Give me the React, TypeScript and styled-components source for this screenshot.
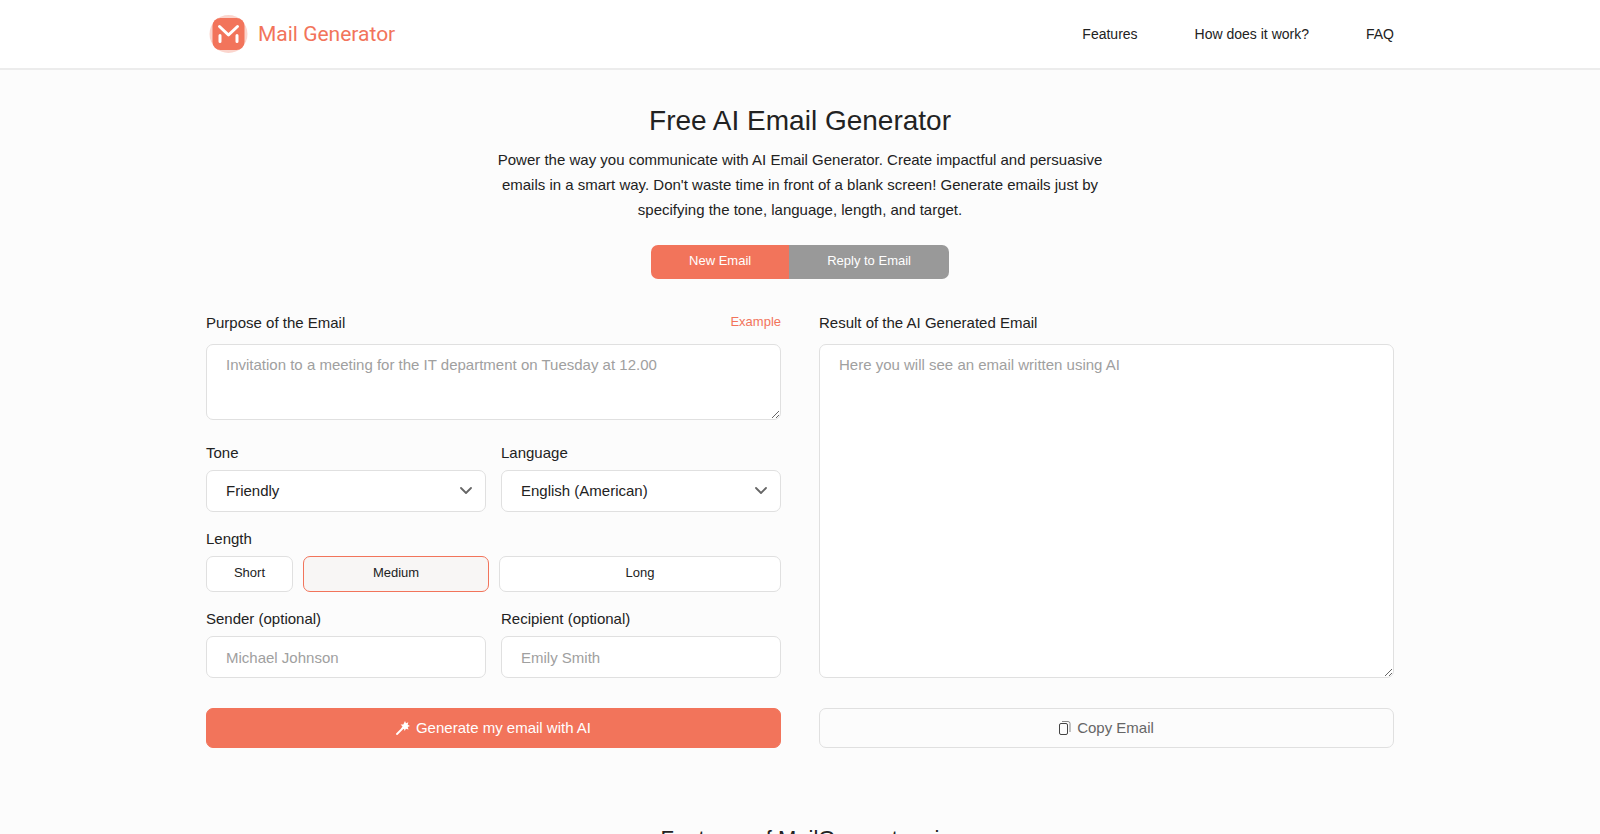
import React, { useState } from "react";
import styled, { createGlobalStyle, css } from "styled-components";

const accent = "#f2745b";
const ink = "#222222";
const line = "#e0e0e0";

const GlobalStyle = createGlobalStyle`
  *, *::before, *::after { box-sizing: border-box; }
  html { scrollbar-width: none; }
  body {
    margin: 0;
    background: #fcfcfc;
    color: ${ink};
    font-family: "Liberation Sans", Arial, sans-serif;
    font-size: 15px;
    line-height: 20px;
  }
  button, input, select, textarea { font: inherit; color: inherit; }
`;

const Page = styled.div`
  min-height: 100vh;
`;

const Container = styled.div`
  width: 100%;
  max-width: 1220px;
  margin: 0 auto;
  padding: 0 16px;
`;

const Main = styled(Container)`
  padding-bottom: 40px;
`;

const Header = styled.header`
  background: #ffffff;
  border-bottom: 2px solid #ececec;
`;

const HeaderRow = styled(Container)`
  display: flex;
  align-items: center;
  justify-content: space-between;
  height: 68px;
`;

const Brand = styled.a`
  display: flex;
  align-items: center;
  gap: 8px;
  color: ${accent};
  font-family: Roboto, sans-serif;
  font-size: 21px;
  font-weight: 400;
  text-decoration: none;
`;

const Nav = styled.nav`
  display: flex;
  gap: 57px;
`;

const NavLink = styled.a`
  color: ${ink};
  font-size: 14px;
  text-decoration: none;
`;

const Hero = styled.section`
  display: flex;
  flex-direction: column;
  align-items: center;
  padding-top: 33px;
  text-align: center;
`;

const Title = styled.h1`
  margin: 0;
  font-size: 28px;
  font-weight: 400;
  line-height: 36px;
`;

const Intro = styled.p`
  max-width: 640px;
  margin: 8px 0 0;
  line-height: 25px;
`;

const Tabs = styled.div`
  display: flex;
  margin-top: 23px;
  border-radius: 7px;
  overflow: hidden;
`;

const Tab = styled.button<{ $active: boolean }>`
  height: 34px;
  padding: 0 38px 3px;
  border: 0;
  background: ${(p) => (p.$active ? accent : "#999999")};
  color: #ffffff;
  font-size: 13px;
  cursor: pointer;
`;

const Form = styled.form`
  display: grid;
  grid-template-columns: 1fr 1fr;
  gap: 30px 38px;
  padding-top: 34px;
`;

const Column = styled.div`
  display: flex;
  flex-direction: column;
  gap: 17px;
`;

const Field = styled.div`
  display: flex;
  flex-direction: column;
  gap: 7px;
`;

const MessageField = styled(Field)`
  gap: 11px;
`;

const PurposeField = styled(MessageField)`
  padding-bottom: 6px;
`;

const Pair = styled.div`
  display: grid;
  grid-template-columns: 1fr 1fr;
  gap: 15px;
`;

const LabelRow = styled.div`
  display: flex;
  justify-content: space-between;
`;

const Caption = styled.label`
  display: block;
`;

const ExampleButton = styled.button`
  padding: 0 0 2px;
  border: 0;
  background: none;
  color: ${accent};
  font-size: 13px;
  line-height: 18px;
  cursor: pointer;
`;

const box = css`
  width: 100%;
  border: 1px solid ${line};
  border-radius: 7px;
  background: #ffffff;
  outline: none;
  &::placeholder { color: #a0a0a0; opacity: 1; }
`;

const TextArea = styled.textarea<{ $grow?: boolean }>`
  ${box}
  display: block;
  height: 76px;
  padding: 10px 19px;
  ${(p) => p.$grow && "flex: 1;"}
`;

const Input = styled.input`
  ${box}
  height: 42px;
  padding: 0 19px;
`;

const SelectWrap = styled.div`
  position: relative;
`;

const Select = styled.select`
  ${box}
  display: block;
  height: 42px;
  padding: 0 40px 0 19px;
  appearance: none;
`;

const Chevron = styled.svg`
  position: absolute;
  top: 16px;
  right: 14px;
  pointer-events: none;
`;

const LengthGroup = styled.fieldset`
  min-width: 0;
  margin: 0;
  padding: 0;
  border: 0;
`;

const Legend = styled.legend`
  padding: 0 0 7px;
`;

const LengthRow = styled.div`
  display: grid;
  grid-template-columns: 87fr 186fr 282fr;
  gap: 10px;
`;

const LengthButton = styled.button<{ $active: boolean }>`
  height: 36px;
  padding: 0 0 2px;
  border: 1px solid ${(p) => (p.$active ? accent : line)};
  border-radius: 7px;
  background: ${(p) => (p.$active ? "#f8f6f5" : "#ffffff")};
  font-size: 13px;
  cursor: pointer;
`;

const Action = styled.button<{ $primary?: boolean }>`
  display: flex;
  align-items: center;
  justify-content: center;
  gap: 6px;
  height: 40px;
  border: 1px solid ${(p) => (p.$primary ? accent : line)};
  border-radius: 7px;
  background: ${(p) => (p.$primary ? accent : "#fcfcfc")};
  color: ${(p) => (p.$primary ? "#ffffff" : "#666666")};
  cursor: pointer;
`;

const SectionTitle = styled.h2`
  margin: 75px 0 0;
  font-size: 22px;
  font-weight: 400;
  line-height: 32px;
  text-align: center;
`;

const Logo = () => (
  <svg width="44" height="40" viewBox="0 0 44 40" aria-hidden="true">
    <circle cx="22.500" cy="20" r="19" fill={accent} opacity="0.3" />
    <rect x="6.500" y="4" width="32" height="32" rx="8" fill={accent} />
    <g stroke="#fff" strokeWidth="3" strokeLinecap="round" strokeLinejoin="round" fill="none">
      <path d="M13.500 12.500 22.500 21 31.500 12.500" />
      <path d="M14 21.500v6M31 21.500v6" />
    </g>
  </svg>
);

const Wand = () => (
  <svg width="14" height="14" viewBox="0 0 14 14" aria-hidden="true">
    <path d="M1 13 7.500 6.500" stroke="#fff" strokeWidth="1.800" strokeLinecap="round" />
    <path
      d="M9 0l1 2.300 2.300-1-.6 2.400L14 5l-2.300 1 .8 2.500-2.600-.8L8.700 10 7.800 7.500 5 7.800l1.500-2.200L4.600 3.500l2.700-.1z"
      fill="#fff"
    />
  </svg>
);

const CopyIcon = () => (
  <svg width="12" height="14" viewBox="0 0 12 14" fill="none" aria-hidden="true">
    <rect x="0.500" y="2.500" width="8" height="11" rx="1.500" stroke="#444" />
    <path d="M3 .5h6a2 2 0 0 1 2 2v8.500" stroke="#888" />
  </svg>
);

const ChevronDown = () => (
  <Chevron width="12" height="10" viewBox="0 0 12 10" fill="none" stroke="#666" strokeWidth="1.800" aria-hidden="true">
    <path d="M1 2l5 5L11 2" strokeLinecap="round" strokeLinejoin="round" />
  </Chevron>
);

const modes = ["New Email", "Reply to Email"];
const lengths = ["Short", "Medium", "Long"];

export default function App() {
  const [mode, setMode] = useState(modes[0]);
  const [length, setLength] = useState("Medium");

  return (
    <Page>
      <GlobalStyle />
      <Header>
        <HeaderRow>
          <Brand href="#home">
            <Logo />
            Mail Generator
          </Brand>
          <Nav>
            <NavLink href="#features">Features</NavLink>
            <NavLink href="#how">How does it work?</NavLink>
            <NavLink href="#faq">FAQ</NavLink>
          </Nav>
        </HeaderRow>
      </Header>
      <Main as="main">
        <Hero>
          <Title>Free AI Email Generator</Title>
          <Intro>
            Power the way you communicate with AI Email Generator. Create impactful and persuasive emails in a smart
            way. Don't waste time in front of a blank screen! Generate emails just by specifying the tone, language,
            length, and target.
          </Intro>
          <Tabs>
            {modes.map((m) => (
              <Tab key={m} type="button" $active={m === mode} onClick={() => setMode(m)}>
                {m}
              </Tab>
            ))}
          </Tabs>
        </Hero>
        <Form onSubmit={(e) => e.preventDefault()}>
          <Column>
            <PurposeField>
              <LabelRow>
                <Caption htmlFor="purpose">Purpose of the Email</Caption>
                <ExampleButton type="button">Example</ExampleButton>
              </LabelRow>
              <TextArea id="purpose" placeholder="Invitation to a meeting for the IT department on Tuesday at 12.00" />
            </PurposeField>
            <Pair>
              <Field>
                <Caption htmlFor="tone">Tone</Caption>
                <SelectWrap>
                  <Select id="tone">
                    <option>Friendly</option>
                  </Select>
                  <ChevronDown />
                </SelectWrap>
              </Field>
              <Field>
                <Caption htmlFor="language">Language</Caption>
                <SelectWrap>
                  <Select id="language">
                    <option>English (American)</option>
                  </Select>
                  <ChevronDown />
                </SelectWrap>
              </Field>
            </Pair>
            <LengthGroup>
              <Legend>Length</Legend>
              <LengthRow>
                {lengths.map((l) => (
                  <LengthButton key={l} type="button" $active={l === length} onClick={() => setLength(l)}>
                    {l}
                  </LengthButton>
                ))}
              </LengthRow>
            </LengthGroup>
            <Pair>
              <Field>
                <Caption htmlFor="sender">Sender (optional)</Caption>
                <Input id="sender" placeholder="Michael Johnson" />
              </Field>
              <Field>
                <Caption htmlFor="recipient">Recipient (optional)</Caption>
                <Input id="recipient" placeholder="Emily Smith" />
              </Field>
            </Pair>
          </Column>
          <MessageField>
            <Caption htmlFor="result">Result of the AI Generated Email</Caption>
            <TextArea id="result" $grow placeholder="Here you will see an email written using AI" />
          </MessageField>
          <Action type="submit" $primary>
            <Wand />
            Generate my email with AI
          </Action>
          <Action type="button">
            <CopyIcon />
            Copy Email
          </Action>
        </Form>
        <SectionTitle id="features">Features of MailGenerator.ai</SectionTitle>
      </Main>
    </Page>
  );
}
